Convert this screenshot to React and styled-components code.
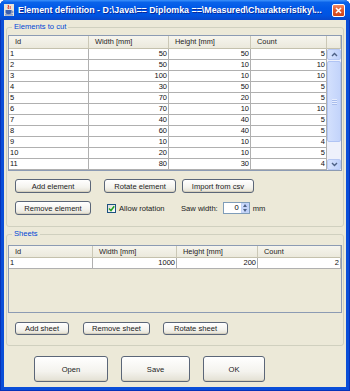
import React from "react";
import styled, { createGlobalStyle } from "styled-components";

const Global = createGlobalStyle`
  html, body {
    margin: 0;
    padding: 0;
    background: #ffffff;
  }
  body {
    font-family: "Liberation Sans", Arial, sans-serif;
  }
`;

const Window = styled.div`
  width: 350px;
  height: 391px;
  box-sizing: border-box;
  display: flex;
  flex-direction: column;
  background: #0a4ed8;
  border-radius: 6px 6px 0 0;
  overflow: hidden;
  padding: 0 4px 4px;
  box-shadow: inset 1px 0 0 #0733b8, inset -1px 0 0 #0733b8, inset 0 -1px 0 #0733b8;
`;

const TitleBar = styled.div`
  height: 20px;
  margin: 0 -4px;
  padding: 0 5px 0 4px;
  display: flex;
  align-items: center;
  gap: 4px;
  background: linear-gradient(
    180deg,
    #3d92fb 0%,
    #0a63ea 12%,
    #0058e7 40%,
    #0054e2 75%,
    #0848cc 100%
  );
`;

const Title = styled.div`
  flex: 1;
  color: #ffffff;
  font-weight: bold;
  font-size: 8.85px;
  white-space: nowrap;
  overflow: hidden;
  text-shadow: 1px 1px 0 #0a2a9a;
`;

const CloseBtn = styled.div`
  width: 13px;
  height: 13px;
  box-sizing: border-box;
  border: 1px solid #ffffff;
  border-radius: 2px;
  background: linear-gradient(180deg, #f08a67 0%, #e35b2e 45%, #cf4419 100%);
  display: flex;
  align-items: center;
  justify-content: center;
`;

const Client = styled.div`
  flex: 1;
  background: #ece9d8;
  padding: 0 2px;
  display: flex;
  flex-direction: column;
`;

const Group = styled.fieldset`
  margin: ${(p) => p.$mt}px 0 0;
  padding: ${(p) => p.$pt}px 1px ${(p) => p.$pb}px;
  border: 1px solid #d0d0bf;
  border-radius: 3px;
  min-width: 0;
`;

const Legend = styled.legend`
  margin-left: 4px;
  padding: 0 2px;
  font-size: 7.6px;
  line-height: 10px;
  color: #0046d5;
`;

const TableFrame = styled.div`
  border: 1px solid #8c9bb3;
  background: ${(p) => (p.$fill ? "#ffffff" : "#ece9d8")};
`;

const HeaderRow = styled.div`
  display: grid;
  grid-template-columns: ${(p) => p.$cols};
  height: ${(p) => p.$h}px;
`;

const HeaderCell = styled.div`
  box-sizing: border-box;
  padding-left: 6px;
  font-size: 7.4px;
  line-height: ${(p) => p.$h - 1}px;
  color: #222;
  background: linear-gradient(180deg, #f6f5ee 0%, #ebe9dc 100%);
  border-right: 1px solid #cbc8b6;
  border-bottom: 1px solid #c4c1ad;
  white-space: nowrap;
  overflow: hidden;
`;

const Body = styled.div`
  display: flex;
  height: ${(p) => p.$h}px;
`;

const Rows = styled.div`
  flex: 1;
  display: flex;
  flex-direction: column;
`;

const Row = styled.div`
  display: grid;
  grid-template-columns: ${(p) => p.$cols};
  height: 11px;
`;

const Cell = styled.div`
  box-sizing: border-box;
  background: #ffffff;
  border-right: 1px solid #b0b0b0;
  border-bottom: 1px solid #b0b0b0;
  padding: 0 1px;
  font-size: 7.5px;
  line-height: 10px;
  color: #111;
  text-align: ${(p) => (p.$left ? "left" : "right")};
`;

const ScrollBar = styled.div`
  width: 14px;
  display: flex;
  flex-direction: column;
  background: #eef1fb;
`;

const ScrollBtn = styled.div`
  height: 11px;
  box-sizing: border-box;
  border: 1px solid #b7c9f3;
  border-radius: 2px;
  background: linear-gradient(90deg, #d8e4fe 0%, #bdd0fb 100%);
  display: flex;
  align-items: center;
  justify-content: center;
`;

const Thumb = styled.div`
  height: ${(p) => p.$h}px;
  margin: 1px 0;
  box-sizing: border-box;
  border: 1px solid #b0c4f4;
  border-radius: 2px;
  background: linear-gradient(90deg, #d3e0fd 0%, #c3d4fb 100%);
  display: flex;
  flex-direction: column;
  align-items: center;
  justify-content: center;
  gap: 1px;
`;

const Grip = styled.div`
  width: 5px;
  height: 1px;
  background: #e6edfe;
  box-shadow: 0 1px 0 #a9bdec;
`;

const Track = styled.div`
  flex: 1;
`;

const BtnRow = styled.div`
  display: flex;
  align-items: center;
  margin-top: ${(p) => p.$mt}px;
  padding-left: ${(p) => p.$pl}px;
  height: ${(p) => p.$h}px;
`;

const Button = styled.div`
  width: ${(p) => p.$w}px;
  height: ${(p) => p.$h}px;
  margin-left: ${(p) => p.$ml || 0}px;
  box-sizing: border-box;
  border: 1px solid #5b6678;
  border-radius: 3px;
  background: linear-gradient(180deg, #ffffff 0%, #f4f3ee 60%, #e3e0d3 100%);
  box-shadow: inset 0 -1px 0 #d6d0bd;
  display: flex;
  align-items: center;
  justify-content: center;
  font-size: 7.6px;
  color: #1a1a1a;
`;

const CheckLabel = styled.label`
  display: flex;
  align-items: center;
  gap: 3px;
  margin-left: ${(p) => p.$ml}px;
  width: ${(p) => p.$w}px;
  font-size: 7.6px;
  color: #1a1a1a;
`;

const CheckBox = styled.span`
  width: 9px;
  height: 9px;
  box-sizing: border-box;
  border: 1px solid #1c5180;
  background: linear-gradient(135deg, #dcdbd5 0%, #ffffff 100%);
  display: flex;
  align-items: center;
  justify-content: center;
`;

const FieldLabel = styled.span`
  font-size: 7.6px;
  color: #1a1a1a;
  margin-left: ${(p) => p.$ml || 0}px;
`;

const Spinner = styled.div`
  width: 27px;
  height: 12px;
  box-sizing: border-box;
  margin-left: ${(p) => p.$ml}px;
  border: 1px solid #7f9db9;
  background: #ffffff;
  display: flex;
`;

const SpinValue = styled.div`
  flex: 1;
  text-align: right;
  padding-right: 2px;
  font-size: 7.6px;
  line-height: 10px;
`;

const SpinArrows = styled.div`
  width: 8px;
  display: flex;
  flex-direction: column;
`;

const SpinHalf = styled.div`
  flex: 1;
  background: linear-gradient(90deg, #d6e2fd, #b9cdfb);
  border: 1px solid #c3d3f6;
  box-sizing: border-box;
  display: flex;
  align-items: center;
  justify-content: center;
`;

const Footer = styled.div`
  display: flex;
  padding: 10px 0 0 28px;
`;

const Chevron = ({ up }) => (
  <svg width="7" height="5" viewBox="0 0 7 5">
    <path
      d={up ? "M1 4 L3.5 1.5 L6 4" : "M1 1 L3.5 3.5 L6 1"}
      fill="none"
      stroke="#4d6185"
      strokeWidth="1.4"
    />
  </svg>
);

const Tiny = ({ up }) => (
  <svg width="4" height="3" viewBox="0 0 4 3">
    <path d={up ? "M0 3 L2 0 L4 3 Z" : "M0 0 L2 3 L4 0 Z"} fill="#4d6185" />
  </svg>
);

const JavaIcon = () => (
  <svg width="10" height="12" viewBox="0 0 10 12">
    <rect x="0" y="0" width="10" height="12" fill="#e8e4d8" />
    <path d="M4 1 C5.5 2.5 3 3.5 4.5 5" stroke="#e0201a" strokeWidth="1" fill="none" />
    <path d="M6 2 C7 3 5.5 4 6.5 5" stroke="#e0201a" strokeWidth="0.8" fill="none" />
    <path d="M1.5 6 H7.5 V9 C7.5 10.5 1.5 10.5 1.5 9 Z" fill="#3a5fb0" />
    <path d="M7.5 7 C9.5 7 9.5 9 7.5 9" stroke="#3a5fb0" strokeWidth="0.8" fill="none" />
    <rect x="1" y="10.5" width="8" height="0.8" fill="#3a5fb0" />
  </svg>
);

const CloseX = () => (
  <svg width="7" height="7" viewBox="0 0 7 7">
    <path d="M1 1 L6 6 M6 1 L1 6" stroke="#ffffff" strokeWidth="1.6" />
  </svg>
);

const Check = () => (
  <svg width="7" height="7" viewBox="0 0 7 7">
    <path d="M1 3.5 L3 5.5 L6.2 1.3" fill="none" stroke="#21a121" strokeWidth="1.5" />
  </svg>
);

const elementCols = "80px 80px 82px 76px";
const sheetCols = "84px 84px 81px 83px";

const elements = [
  [1, 50, 50, 5],
  [2, 50, 10, 10],
  [3, 100, 10, 10],
  [4, 30, 50, 5],
  [5, 70, 20, 5],
  [6, 70, 10, 10],
  [7, 40, 40, 5],
  [8, 60, 40, 5],
  [9, 10, 10, 4],
  [10, 20, 10, 5],
  [11, 80, 30, 4],
];

const sheets = [[1, 1000, 200, 2]];

const headers = ["Id", "Width [mm]", "Height [mm]", "Count"];

function DataTable({ cols, rows, headerH, bodyH, scroll }) {
  return (
    <TableFrame $fill={scroll}>
      <HeaderRow $cols={scroll ? cols + " 14px" : cols} $h={headerH}>
        {headers.map((h) => (
          <HeaderCell key={h} $h={headerH}>
            {h}
          </HeaderCell>
        ))}
        {scroll && <HeaderCell $h={headerH} />}
      </HeaderRow>
      <Body $h={bodyH}>
        <Rows>
          {rows.map((r) => (
            <Row key={r[0]} $cols={cols}>
              {r.map((v, i) => (
                <Cell key={i} $left={i === 0}>
                  {v}
                </Cell>
              ))}
            </Row>
          ))}
        </Rows>
        {scroll && (
          <ScrollBar>
            <ScrollBtn>
              <Chevron up />
            </ScrollBtn>
            <Thumb $h={81}>
              <Grip />
              <Grip />
              <Grip />
            </Thumb>
            <Track />
            <ScrollBtn>
              <Chevron />
            </ScrollBtn>
          </ScrollBar>
        )}
      </Body>
    </TableFrame>
  );
}

export default function App() {
  return (
    <>
      <Global />
      <Window>
        <TitleBar>
          <JavaIcon />
          <Title>Element definition - D:\Java\== Diplomka ==\Measured\Charakteristiky\...</Title>
          <CloseBtn>
            <CloseX />
          </CloseBtn>
        </TitleBar>
        <Client>
          <Group $mt={2} $pt={3} $pb={11}>
            <Legend>Elements to cut</Legend>
            <DataTable cols={elementCols} rows={elements} headerH={13} bodyH={121} scroll />
            <BtnRow $mt={8} $pl={7} $h={14}>
              <Button $w={76} $h={14}>Add element</Button>
              <Button $w={72} $h={14} $ml={13}>Rotate element</Button>
              <Button $w={72} $h={14} $ml={6}>Import from csv</Button>
            </BtnRow>
            <BtnRow $mt={8} $pl={7} $h={14}>
              <Button $w={76} $h={14}>Remove element</Button>
              <CheckLabel $ml={16} $w={74}>
                <CheckBox>
                  <Check />
                </CheckBox>
                Allow rotation
              </CheckLabel>
              <FieldLabel>Saw width:</FieldLabel>
              <Spinner $ml={5}>
                <SpinValue>0</SpinValue>
                <SpinArrows>
                  <SpinHalf>
                    <Tiny up />
                  </SpinHalf>
                  <SpinHalf>
                    <Tiny />
                  </SpinHalf>
                </SpinArrows>
              </Spinner>
              <FieldLabel $ml={3}>mm</FieldLabel>
            </BtnRow>
          </Group>
          <Group $mt={2} $pt={6} $pb={10}>
            <Legend>Sheets</Legend>
            <DataTable cols={sheetCols} rows={sheets} headerH={12} bodyH={54} />
            <BtnRow $mt={9} $pl={7} $h={13}>
              <Button $w={54} $h={13}>Add sheet</Button>
              <Button $w={67} $h={13} $ml={14}>Remove sheet</Button>
              <Button $w={65} $h={13} $ml={13}>Rotate sheet</Button>
            </BtnRow>
          </Group>
          <Footer>
            <Button $w={74} $h={26}>Open</Button>
            <Button $w={69} $h={26} $ml={13}>Save</Button>
            <Button $w={62} $h={26} $ml={13}>OK</Button>
          </Footer>
        </Client>
      </Window>
    </>
  );
}
